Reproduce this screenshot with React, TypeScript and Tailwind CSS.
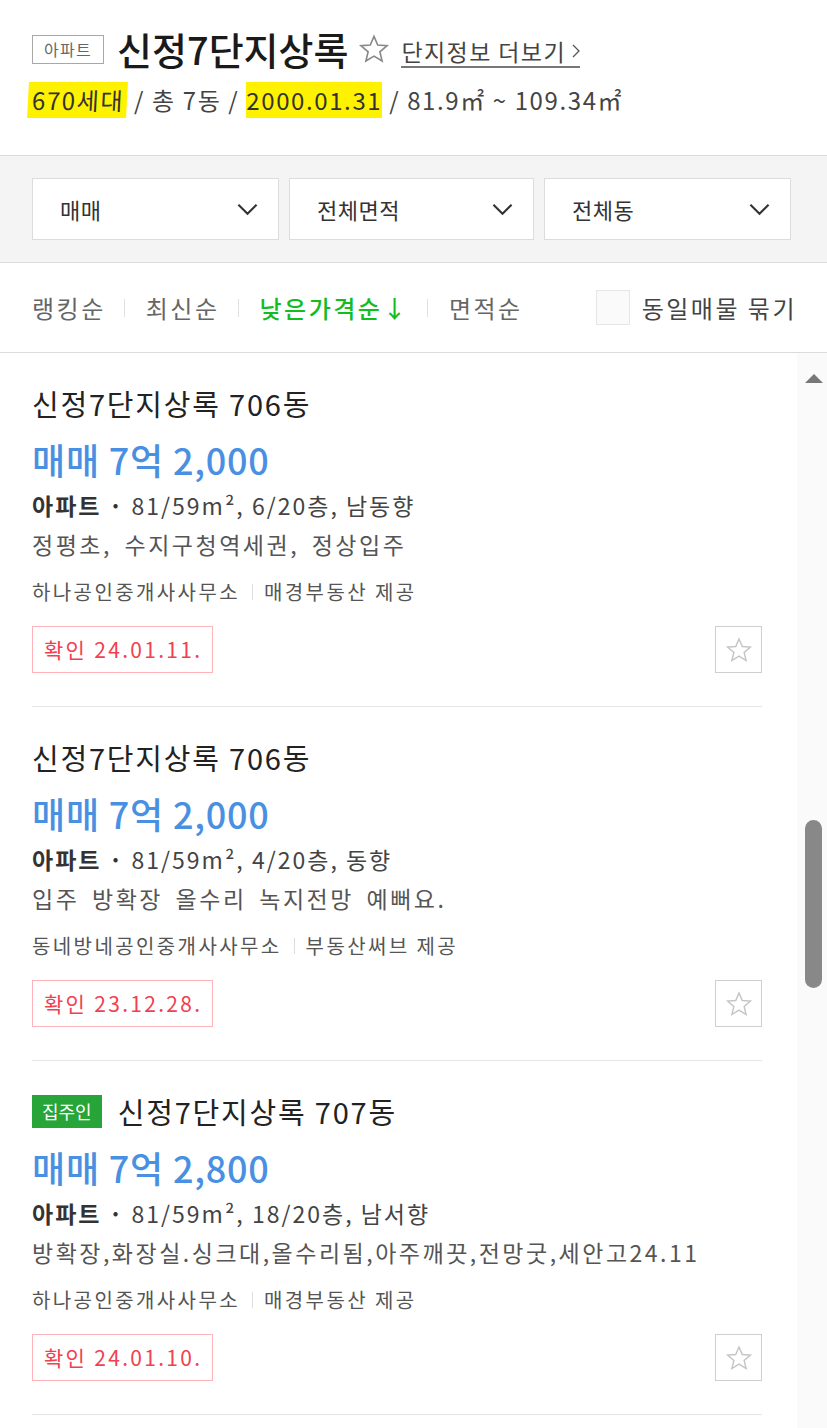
import React from 'react';

const FONT = { fontFamily: '"Noto Sans CJK KR", "Noto Sans", sans-serif' };

interface Listing {
  title: string;
  owner?: boolean;
  price: string;
  spec: string;
  desc: string;
  agency: string;
  source: string;
  confirmed: string;
}

const listings: Listing[] = [
  {
    title: '신정7단지상록 706동',
    price: '매매 7억 2,000',
    spec: '81/59m², 6/20층, 남동향',
    desc: '정평초, 수지구청역세권, 정상입주',
    agency: '하나공인중개사사무소',
    source: '매경부동산 제공',
    confirmed: '24.01.11.',
  },
  {
    title: '신정7단지상록 706동',
    price: '매매 7억 2,000',
    spec: '81/59m², 4/20층, 동향',
    desc: '입주 방확장 올수리 녹지전망 예뻐요.',
    agency: '동네방네공인중개사사무소',
    source: '부동산써브 제공',
    confirmed: '23.12.28.',
  },
  {
    title: '신정7단지상록 707동',
    owner: true,
    price: '매매 7억 2,800',
    spec: '81/59m², 18/20층, 남서향',
    desc: '방확장,화장실.싱크대,올수리됨,아주깨끗,전망굿,세안고24.11',
    agency: '하나공인중개사사무소',
    source: '매경부동산 제공',
    confirmed: '24.01.10.',
  },
];

const StarIcon = ({ className, color }: { className?: string; color: string }) => (
  <svg viewBox="0 0 24 24" className={className} fill="none">
    <polygon
      points="12,2.5 14.8,9 21.8,9.5 16.4,14.1 18.1,21 12,17.3 5.9,21 7.6,14.1 2.2,9.5 9.2,9"
      stroke={color}
      strokeWidth="1.2"
      strokeLinejoin="miter"
    />
  </svg>
);

const Chevron = () => (
  <svg viewBox="0 0 22 13" className="w-[21px] h-[13px]" fill="none">
    <path d="M1.5 1.5 L11 11 L20.5 1.5" stroke="#333" strokeWidth="2.2" />
  </svg>
);

const Dropdown = ({ label, className }: { label: string; className: string }) => (
  <div className={`h-[62px] bg-white border border-[#dcdcdc] flex items-center justify-between pl-[27px] pr-[20px] ${className}`}>
    <span className="text-[22px] text-[#333] tracking-[0.5px]">{label}</span>
    <Chevron />
  </div>
);

const Sep = () => <span className="w-px h-[18px] bg-[#e0e0e0] ml-[18px] mr-[21px]" />;

const ListingCard = ({ item }: { item: Listing }) => (
  <div className="pt-[28px] pb-[33px] border-b border-[#e5e5e5]">
    <div className="flex items-center h-[44px]">
      {item.owner && (
        <span className="bg-[#27a539] text-white text-[18px] h-[33px] px-[10px] flex items-center mr-[16px] leading-none">
          집주인
        </span>
      )}
      <span className="text-[29px] tracking-[1.8px] text-[#222] leading-[44px]">{item.title}</span>
    </div>
    <div className="mt-[10px] text-[36px] tracking-[0.8px] leading-[48px] text-[#4a90e2] font-medium">{item.price}</div>
    <div className="mt-[3px] text-[23px] tracking-[2px] leading-[38px] text-[#444]">
      <span className="font-bold text-[#333]">아파트 · </span>
      {item.spec}
    </div>
    <div className="mt-px text-[23px] tracking-[2.5px] [word-spacing:5px] leading-[38px] text-[#555]">{item.desc}</div>
    <div className="mt-[12px] flex items-center text-[20px] tracking-[2.4px] leading-[34px] text-[#555]">
      <span>{item.agency}</span>
      <span className="w-px h-[16px] bg-[#ddd] ml-[12px] mr-[11px]" />
      <span>{item.source}</span>
    </div>
    <div className="mt-[17px] flex items-center justify-between">
      <span className="h-[47px] border border-[#ffb4bb] flex items-center pl-[11px] pr-[10px] text-[21px] tracking-[2.3px] text-[#f2404f]">
        확인&nbsp;{item.confirmed}
      </span>
      <span className="w-[47px] h-[47px] border border-[#cfcfcf] flex items-center justify-center">
        <StarIcon className="w-[28px] h-[28px]" color="#c4c4c4" />
      </span>
    </div>
  </div>
);

export default function App() {
  return (
    <div className="w-[827px] h-[1428px] overflow-hidden bg-white" style={FONT}>
      {/* header */}
      <div className="pt-[24px] pb-[37px] px-[32px] border-b border-[#dcdcdc]">
        <div className="flex items-center h-[50px]">
          <span className="h-[29px] px-[11px] border border-[#a8a8a8] text-[16px] tracking-[1.3px] text-[#666] flex items-center leading-none">
            아파트
          </span>
          <span className="ml-[13px] text-[38px] font-medium text-[#1a1a1a] leading-[50px]">신정7단지상록</span>
          <StarIcon className="ml-[10px] w-[32px] h-[32px]" color="#888" />
          <span className="ml-[11px] flex items-center gap-[6px] text-[23px] tracking-[1.4px] text-[#444] border-b-2 border-[#777] leading-[30px] mt-[6px]">
            단지정보 더보기
            <svg viewBox="0 0 8 14" className="w-[8px] h-[14px]" fill="none">
              <path d="M1 1 L7 7 L1 13" stroke="#555" strokeWidth="1.3" />
            </svg>
          </span>
        </div>
        <div className="h-[36px] flex items-center text-[24px] tracking-[1.6px] text-[#444] mt-[8px]">
          <span className="bg-[#fff200] -ml-[4px] pl-[4px] pr-[3px] text-[#333] -skew-x-3">670세대</span>
          <span>&nbsp;/ 총 7동 /&nbsp;</span>
          <span className="bg-[#fff200] text-[#333]">2000.01.31</span>
          <span>&nbsp;/ 81.9㎡ ~ 109.34㎡</span>
        </div>
      </div>

      {/* filters */}
      <div className="bg-[#f4f4f4] pt-[22px] pb-[22px] pl-[32px] pr-[36px] flex gap-[10px] border-b border-[#dcdcdc]">
        <Dropdown label="매매" className="w-[247px]" />
        <Dropdown label="전체면적" className="w-[245px]" />
        <Dropdown label="전체동" className="w-[247px]" />
      </div>

      {/* sort row */}
      <div className="h-[90px] flex items-center pl-[32px] pr-[30px] border-b border-[#dcdcdc] text-[24px] tracking-[2.5px]">
        <span className="text-[#666]">랭킹순</span>
        <Sep />
        <span className="text-[#666]">최신순</span>
        <Sep />
        <span className="text-[#14bd1f] font-medium">낮은가격순↓</span>
        <Sep />
        <span className="text-[#666]">면적순</span>
        <div className="ml-auto flex items-center">
          <span className="w-[34px] h-[35px] border border-[#e6e6e6] bg-[#fafafa]" />
          <span className="ml-[12px] text-[#444]">동일매물 묶기</span>
        </div>
      </div>

      {/* list */}
      <div className="flex">
        <div className="w-[797px] pl-[32px] pr-[35px]">
          {listings.map((item, i) => (
            <ListingCard key={i} item={item} />
          ))}
        </div>
        <div className="relative w-[30px] h-[1080px] bg-[#fafafa]">
          <span className="absolute left-[8px] top-[21px] w-0 h-0 border-l-[9px] border-r-[9px] border-b-[9px] border-l-transparent border-r-transparent border-b-[#777]" />
          <span className="absolute left-[8px] top-[467px] w-[17px] h-[168px] rounded-full bg-[#888]" />
        </div>
      </div>
    </div>
  );
}
